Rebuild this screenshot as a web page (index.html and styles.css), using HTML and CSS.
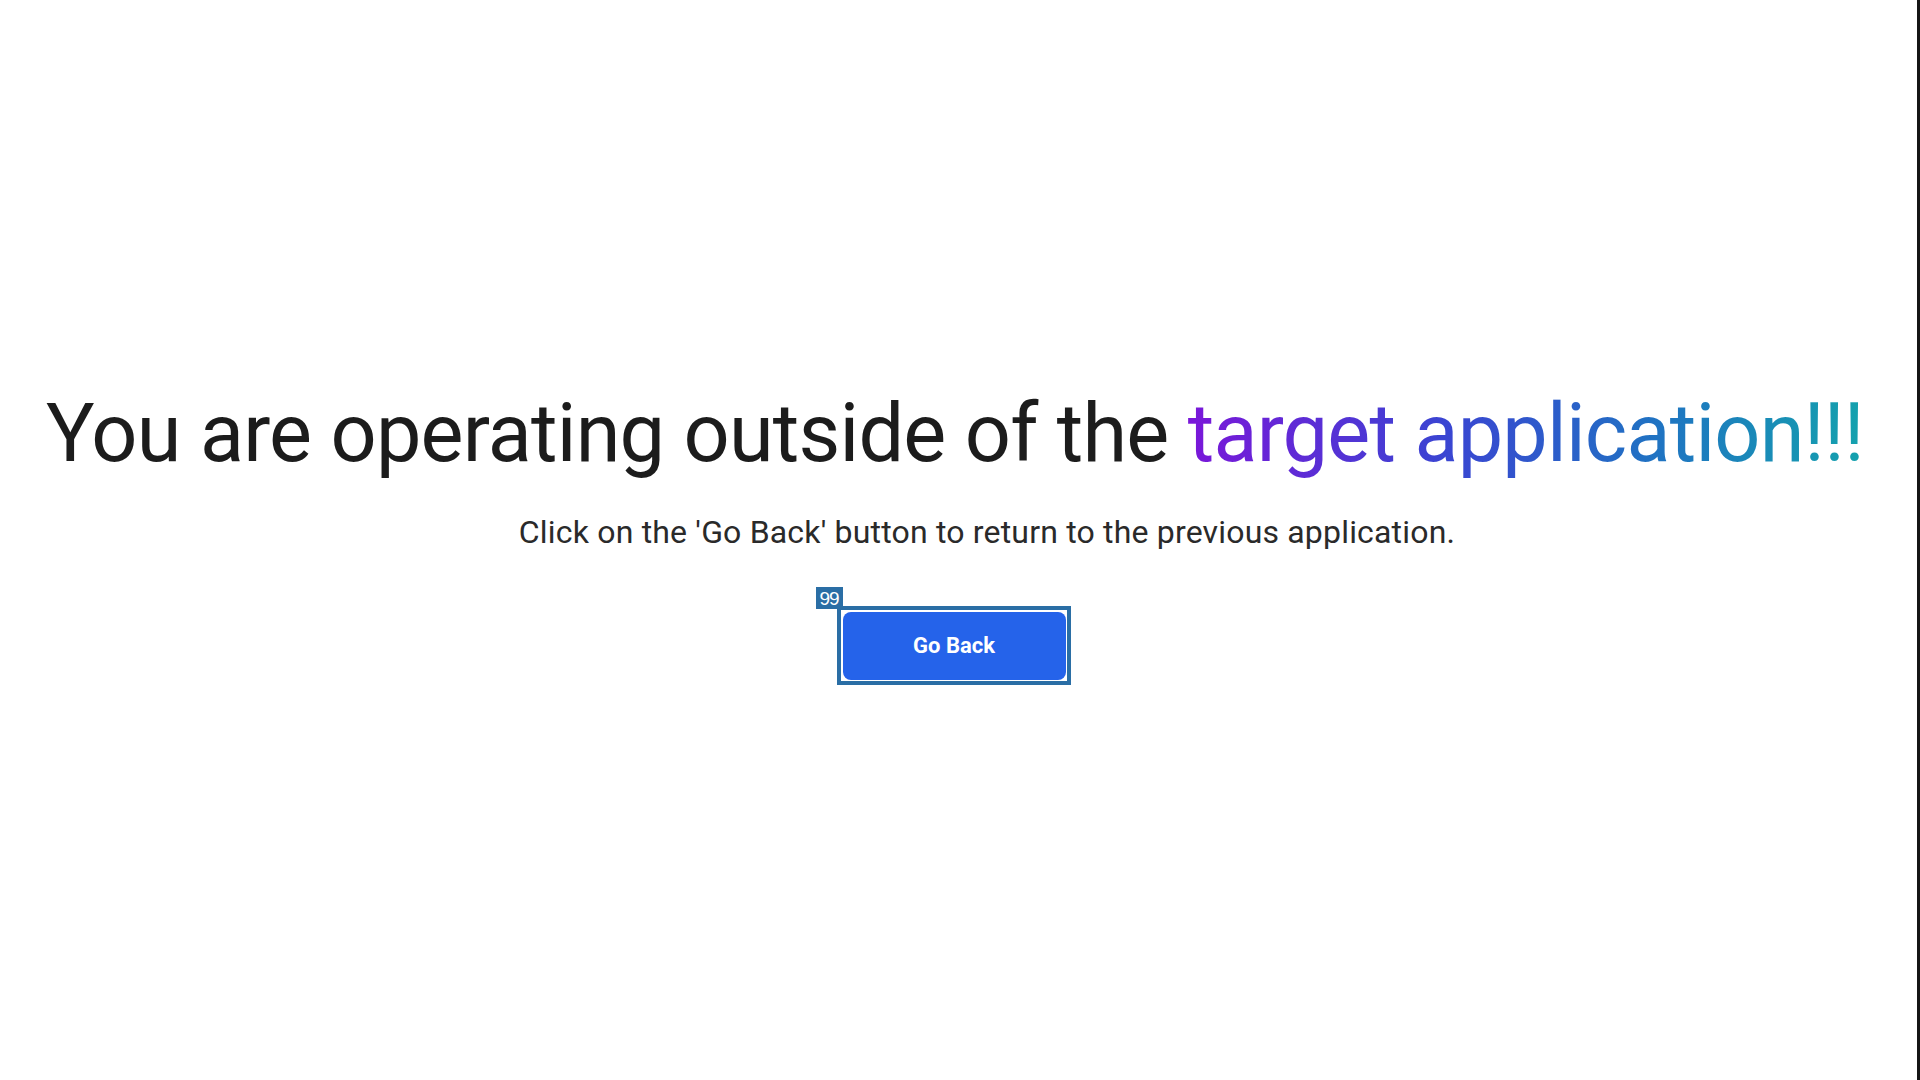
FILE: index.html
```html
<!DOCTYPE html>
<html lang="en">
<head>
<meta charset="utf-8">
<title>Outside target application</title>
<link rel="stylesheet" href="styles.css">
</head>
<body>
<main class="page">
  <h1 class="title">You are operating outside of the <span class="grad">target application!!!</span></h1>
  <p class="subtitle">Click on the 'Go Back' button to return to the previous application.</p>
  <div class="btn-wrap">
    <button class="btn" type="button">Go Back</button>
    <span class="annot"></span>
    <span class="annot-label">99</span>
  </div>
</main>
</body>
</html>
```
FILE: styles.css
```css
html, body {
  margin: 0;
  padding: 0;
  background: #ffffff;
}
body {
  font-family: Roboto, "Liberation Sans", sans-serif;
}
.page {
  box-sizing: border-box;
  width: 1920px;
  height: 1080px;
  border-right: 3px solid #161616;
  padding: 385px 7px 0 0;
  display: flex;
  flex-direction: column;
  align-items: center;
}
.title {
  margin: 0;
  font-size: 81px;
  line-height: 1.2;
  font-weight: 400;
  color: #1c1c1c;
  letter-spacing: -0.8px;
  white-space: nowrap;
}
.grad {
  background: linear-gradient(90deg, #7a17d9 0%, #3a45d2 38%, #1f74c2 70%, #14a2ad 100%);
  -webkit-background-clip: text;
  background-clip: text;
  color: transparent;
}
.subtitle {
  margin: 31px 0 0 64px;
  font-size: 32px;
  line-height: 1.2;
  color: #2a2a2a;
  letter-spacing: 0.18px;
  white-space: nowrap;
}
.btn-wrap {
  position: relative;
  margin-top: 60px;
  margin-right: 2px;
}
.btn {
  display: block;
  width: 223px;
  height: 68px;
  border: 0;
  border-radius: 8px;
  background: #2563ea;
  color: #ffffff;
  font-family: Roboto, "Liberation Sans", sans-serif;
  font-weight: 700;
  font-size: 22px;
  cursor: pointer;
}
.annot {
  position: absolute;
  top: -6px;
  left: -6px;
  right: -5px;
  bottom: -5px;
  border: 4px solid #2a6ea5;
  pointer-events: none;
}
.annot-label {
  position: absolute;
  left: -27px;
  top: -25px;
  width: 27px;
  height: 22px;
  background: #2a6ea5;
  color: #ffffff;
  font-family: "Liberation Sans", Arial, sans-serif;
  font-size: 19px;
  line-height: 23px;
  text-align: center;
  letter-spacing: -1px;
}
```
